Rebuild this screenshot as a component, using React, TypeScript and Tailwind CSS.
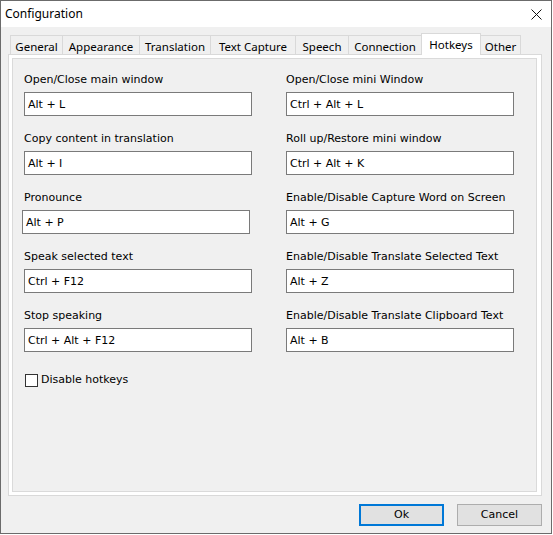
import React from "react";

const tabs = [
  { name: "General", w: "w-[53px]" },
  { name: "Appearance", w: "w-[78px]" },
  { name: "Translation", w: "w-[72px]" },
  { name: "Text Capture", w: "w-[86px]" },
  { name: "Speech", w: "w-[54px]" },
  { name: "Connection", w: "w-[74px]" },
  { name: "Hotkeys", w: "w-[60px]", active: true },
  { name: "Other", w: "w-[41px]" },
];

const left = [
  { label: "Open/Close main window", value: "Alt + L" },
  { label: "Copy content in translation", value: "Alt + I" },
  { label: "Pronounce", value: "Alt + P", shift: true },
  { label: "Speak selected text", value: "Ctrl + F12" },
  { label: "Stop speaking", value: "Ctrl + Alt + F12" },
];

const right = [
  { label: "Open/Close mini Window", value: "Ctrl + Alt + L" },
  { label: "Roll up/Restore mini window", value: "Ctrl + Alt + K" },
  { label: "Enable/Disable Capture Word on Screen", value: "Alt + G" },
  { label: "Enable/Disable Translate Selected Text", value: "Alt + Z" },
  { label: "Enable/Disable Translate Clipboard Text", value: "Alt + B" },
];

const ui = "font-['DejaVu_Sans',sans-serif] text-[11px] text-black";
const seg = "font-['Noto_Sans',sans-serif] text-[11.5px] text-black";

function Field({ label, value, shift }: { label: string; value: string; shift?: boolean }) {
  return (
    <div className="flex flex-col">
      <div className="h-[16px] leading-[20px] whitespace-nowrap">{label}</div>
      <div
        className={
          "mt-[6px] h-[24px] w-[228px] border border-[#7a7a7a] bg-white pl-[3px] leading-[23px] " +
          (shift ? "-ml-[2px]" : "")
        }
      >
        {value}
      </div>
    </div>
  );
}

export default function App() {
  return (
    <div className="w-[553px] h-[535px] bg-white">
      <div className="w-[552px] h-[534px] border border-[#6b6b6b] flex flex-col bg-[#f0f0f0]">
        {/* title bar */}
        <div className="h-[26px] bg-white flex items-center justify-between pl-[4px] pr-[9px]">
          <span className={seg + " text-[12px]"}>Configuration</span>
          <svg width="11" height="11" viewBox="0 0 11 11" className="mt-[1px]">
            <path d="M0.5 0.5 L10.5 10.5 M10.5 0.5 L0.5 10.5" stroke="#111" strokeWidth="1" />
          </svg>
        </div>

        <div className="flex-1 pl-[7px] pt-[6px]">
          {/* tabs */}
          <div className="flex items-end h-[21px] pl-[2px] relative z-10">
            {tabs.map((t, i) => (
              <div
                key={t.name}
                className={
                  t.w +
                  " " +
                  seg +
                  " border-t border-l border-r border-[#d9d9d9] flex justify-center " +
                  (i > 0 ? "-ml-px " : "") +
                  (t.active
                    ? "h-[22px] -mb-px bg-white z-10 pt-[2px] leading-[17px]"
                    : "h-[19px] bg-[#f0f0f0] pt-[2px] leading-[17px]")
                }
              >
                {t.name}
              </div>
            ))}
          </div>

          {/* panel */}
          <div className="w-[534px] h-[442px] border border-[#d9d9d9] bg-white pt-[3px] pl-[3px] pr-[4px] pb-[3px]">
            <div className={"h-full border border-[#dadada] bg-[#f0f0f0] pl-[11px] pt-[11px] " + ui}>
              <div className="flex gap-[34px]">
                <div className="flex flex-col gap-[13px] w-[228px]">
                  {left.map((f) => (
                    <Field key={f.label} {...f} />
                  ))}
                </div>
                <div className="flex flex-col gap-[13px] w-[228px]">
                  {right.map((f) => (
                    <Field key={f.label} {...f} />
                  ))}
                </div>
              </div>
              <div className="flex items-center mt-[21px] pl-[1px]">
                <div className="w-[13px] h-[13px] border border-[#333] bg-white" />
                <span className="ml-[3px] leading-[14px]">Disable hotkeys</span>
              </div>
            </div>
          </div>

          {/* buttons */}
          <div className={"w-[534px] flex justify-end gap-[13px] mt-[8px] " + ui}>
            <button className="w-[85px] h-[22px] border-2 border-[#0078d7] bg-[#e1e1e1] leading-[18px]">
              Ok
            </button>
            <button className="w-[85px] h-[22px] border border-[#adadad] bg-[#e1e1e1] leading-[20px]">
              Cancel
            </button>
          </div>
        </div>
      </div>
    </div>
  );
}
